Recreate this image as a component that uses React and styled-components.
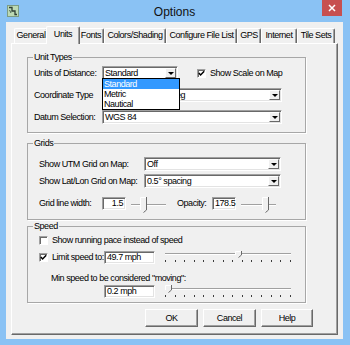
import React from "react";
import styled, { createGlobalStyle } from "styled-components";

const ui = `"Liberation Sans", Arial, sans-serif`;

const GlobalStyle = createGlobalStyle`
  html, body {
    margin: 0;
    padding: 0;
  }
  body {
    width: 350px;
    height: 345px;
    overflow: hidden;
    background: #8ac2f4;
  }
`

const Window = styled.div`
  width: 350px;
  height: 345px;
  box-sizing: border-box;
  background: #8ac2f4;
  display: flex;
  flex-direction: column;
  padding: 0 7px 8px 6px;
  font-family: ${ui};
  font-size: 9px;
  letter-spacing: -0.45px;
  color: #000;
`
const TitleBar = styled.div`
  height: 22px;
  flex: none;
  display: grid;
  grid-template-columns: 1fr auto 1fr;
  align-items: start;
`
const AppIcon = styled.svg`
  margin: 5px 0 0 1px;
`
const Title = styled.div`
  font-size: 12px;
  letter-spacing: 0;
  line-height: 14px;
  padding-top: 5px;
  color: #111;
`
const Close = styled.div`
  justify-self: end;
  margin-right: 1px;
  width: 20px;
  height: 16px;
  background: #c75050;
  display: flex;
  align-items: center;
  justify-content: center;
`
const Client = styled.div`
  flex: 1;
  background: #f0f0f0;
  display: flex;
  flex-direction: column;
  padding: 0 5px 4px 5px;
`
const TabRow = styled.div`
  height: 21px;
  flex: none;
  display: flex;
  align-items: flex-end;
  padding-left: 3px;
`
const Tab = styled.div`
  box-sizing: border-box;
  width: ${({ w, active }) => (active ? w + 4 : w)}px;
  height: ${({ active }) => (active ? 18 : 15)}px;
  margin: ${({ active }) => (active ? "0 -2px -1px -2px" : "0")};
  position: relative;
  z-index: ${({ active }) => (active ? 1 : 0)};
  background: #f0f0f0;
  border-top: 1px solid #fff;
  border-left: 1px solid #fff;
  border-right: 1px solid #696969;
  border-radius: 2px 2px 0 0;
  box-shadow: inset -1px 0 0 #a0a0a0;
  text-align: center;
  line-height: ${({ active }) => (active ? 14 : 13)}px;
  white-space: nowrap;
`
const Panel = styled.div`
  flex: 1;
  box-sizing: border-box;
  display: flex;
  flex-direction: column;
  border: 1px solid;
  border-color: #fff #696969 #696969 #fff;
  box-shadow: inset -1px -1px 0 #a0a0a0;
  padding: 7px 0 7px 15px;
`
const Group = styled.fieldset`
  margin: 0 0 ${({ mb }) => mb || 0}px 0;
  padding: 0;
  min-width: 0;
  width: 279px;
  box-sizing: border-box;
  border: 1px solid #a7a7a7;
  box-shadow: 1px 1px 0 #fff;
`
const Legend = styled.legend`
  margin-left: 5px;
  padding: 0 1px;
  line-height: 12px;
`
const GroupBody = styled.div`
  display: flex;
  flex-direction: column;
  padding: ${({ pad }) => pad};
`
const Row = styled.div`
  display: flex;
  align-items: ${({ top }) => (top ? "flex-start" : "center")};
  margin-top: ${({ mt }) => mt || 0}px;
  padding-left: ${({ indent }) => indent || 0}px;
  width: ${({ w }) => (w ? `${w}px` : "auto")};
  flex: none;
`
const Label = styled.div`
  width: ${({ w }) => (w ? `${w}px` : "auto")};
  flex: none;
  line-height: 13px;
  white-space: nowrap;
  margin-left: ${({ ml }) => ml || 0}px;
`
const ComboWrap = styled.div`
  position: relative;
  width: ${({ w }) => w}px;
  height: 14px;
  flex: none;
`
const ComboBox = styled.div`
  box-sizing: border-box;
  width: 100%;
  height: 100%;
  background: #fff;
  border: 1px solid;
  border-color: #a0a0a0 #fff #fff #a0a0a0;
  box-shadow: inset 1px 1px 0 #696969, inset -1px -1px 0 #e3e3e3;
  display: flex;
  align-items: stretch;
`
const ComboText = styled.div`
  flex: 1;
  padding-left: 2px;
  line-height: 12px;
  white-space: nowrap;
  overflow: hidden;
`
const ArrowBtn = styled.div`
  box-sizing: border-box;
  width: 11px;
  margin: 1px 1px 1px 0;
  background: #f0f0f0;
  border: 1px solid;
  border-color: #fff #696969 #696969 #fff;
  display: flex;
  align-items: center;
  justify-content: center;
  &::after {
    content: "";
    width: 0;
    height: 0;
    border-left: 3px solid transparent;
    border-right: 3px solid transparent;
    border-top: 3px solid #000;
    margin-top: 1px;
  }
`
const DropList = styled.div`
  position: absolute;
  left: 0;
  top: 12px;
  width: 78px;
  box-sizing: border-box;
  border: 1px solid #000;
  background: #fff;
  z-index: 2;
`
const DropItem = styled.div`
  height: 10px;
  line-height: 10px;
  padding-left: 1px;
  background: ${({ selected }) => (selected ? "#3399ff" : "#fff")};
  color: ${({ selected }) => (selected ? "#fff" : "#000")};
`
const CheckBox = styled.div`
  box-sizing: border-box;
  width: 9px;
  height: 9px;
  flex: none;
  background: #fff;
  border: 1px solid;
  border-color: #a0a0a0 #fff #fff #a0a0a0;
  box-shadow: inset 1px 1px 0 #696969;
  margin-right: 4px;
  display: flex;
  align-items: center;
  justify-content: center;
`
const Edit = styled.div`
  box-sizing: border-box;
  width: ${({ w }) => w}px;
  height: 13px;
  flex: none;
  background: #fff;
  border: 1px solid;
  border-color: #a0a0a0 #fff #fff #a0a0a0;
  box-shadow: inset 1px 1px 0 #696969, inset -1px -1px 0 #e3e3e3;
  padding: 0 2px;
  line-height: 11px;
  text-align: ${({ right }) => (right ? "right" : "left")};
  white-space: nowrap;
`
const SliderBox = styled.div`
  position: relative;
  width: ${({ w }) => w}px;
  height: ${({ h }) => h}px;
  margin-left: ${({ ml }) => ml || 0}px;
  flex: none;
`
const Track = styled.div`
  position: absolute;
  left: 0;
  right: 0;
  top: ${({ y }) => y}px;
  height: 2px;
  border-top: 1px solid #a0a0a0;
  border-bottom: 1px solid #fff;
  box-sizing: border-box;
`
const Thumb = styled.svg`
  position: absolute;
  top: 0;
`
const Ticks = styled.div`
  position: absolute;
  left: 0;
  right: 0;
  top: ${({ y }) => y}px;
  display: flex;
  justify-content: space-between;
`
const Tick = styled.span`
  width: 1px;
  height: 2px;
  background: #3c3c3c;
`
const ButtonRow = styled.div`
  display: flex;
  justify-content: flex-end;
  gap: 5px;
  padding-right: 24px;
  margin-top: 6px;
`
const Button = styled.div`
  box-sizing: border-box;
  width: ${({ w }) => w}px;
  height: 18px;
  background: #f0f0f0;
  border: 1px solid;
  border-color: #fff #696969 #696969 #fff;
  box-shadow: inset -1px -1px 0 #a0a0a0;
  display: flex;
  align-items: center;
  justify-content: center;
`

const Combo = ({ w, value, children }) => (
  <ComboWrap w={w}>
    <ComboBox>
      <ComboText>{value}</ComboText>
      <ArrowBtn />
    </ComboBox>
    {children}
  </ComboWrap>
)

const Check = ({ checked }) => (
  <CheckBox>
    {checked && (
      <svg width="7" height="7" viewBox="0 0 7 7">
        <path d="M0.8 3 L2.6 4.9 L6.2 1.2" fill="none" stroke="#000" strokeWidth="1.5" />
      </svg>
    )}
  </CheckBox>
)

const Slider = ({ w, h, trackY, pos, thumbH, ticks, tickY, ml }) => (
  <SliderBox w={w} h={h} ml={ml}>
    <Track y={trackY} />
    {ticks && (
      <Ticks y={tickY}>
        {Array.from({ length: ticks }).map((_, i) => (
          <Tick key={i} />
        ))}
      </Ticks>
    )}
    <Thumb width="7" height={thumbH} style={{ left: pos }} viewBox={`0 0 7 ${thumbH}`}>
      <path d={`M0 0 H7 V${thumbH - 3} L3.5 ${thumbH} L0 ${thumbH - 3} Z`} fill="#f0f0f0" />
      <path d={`M0.5 ${thumbH - 3} V0.5 H6`} fill="none" stroke="#fff" />
      <path d={`M6.5 0 V${thumbH - 3} L3.5 ${thumbH - 0.5}`} fill="none" stroke="#696969" />
    </Thumb>
  </SliderBox>
)

const tabs = [
  ["General", 34],
  ["Units", 30],
  ["Fonts", 26],
  ["Colors/Shading", 62],
  ["Configure File List", 71],
  ["GPS", 24],
  ["Internet", 36],
  ["Tile Sets", 38],
]

export default function App() {
  return (
    <>
      <GlobalStyle />
      <Window>
        <TitleBar>
          <AppIcon width="12" height="12" viewBox="0 0 12 12">
            <rect x="0.5" y="0.5" width="11" height="11" fill="#bcd9b4" stroke="#7c9c84" />
            <path d="M2 2.5 H5 V6 H8 V9.5 H10" fill="none" stroke="#2f3f36" strokeWidth="1.3" />
            <path d="M2.5 5 L4 8" fill="none" stroke="#4b6455" strokeWidth="1" />
          </AppIcon>
          <Title>Options</Title>
          <Close>
            <svg width="8" height="8" viewBox="0 0 8 8">
              <path d="M1 1 L7 7 M7 1 L1 7" stroke="#fff" strokeWidth="1.5" />
            </svg>
          </Close>
        </TitleBar>
        <Client>
          <TabRow>
            {tabs.map(([name, w]) => (
              <Tab key={name} w={w} active={name === "Units"}>
                {name}
              </Tab>
            ))}
          </TabRow>
          <Panel>
            <Group mb={4}>
              <Legend>Unit Types</Legend>
              <GroupBody pad="3px 0 8px 6px">
                <Row>
                  <Label w={68}>Units of Distance:</Label>
                  <Combo w={76} value="Standard">
                    <DropList>
                      <DropItem selected>Standard</DropItem>
                      <DropItem>Metric</DropItem>
                      <DropItem>Nautical</DropItem>
                    </DropList>
                  </Combo>
                  <Row indent={19}>
                    <Check checked />
                    <Label>Show Scale on Map</Label>
                  </Row>
                </Row>
                <Row mt={8}>
                  <Label w={68}>Coordinate Type</Label>
                  <Combo w={180} value="Lat/Lon - Decimal Deg" />
                </Row>
                <Row mt={8}>
                  <Label w={68}>Datum Selection:</Label>
                  <Combo w={180} value="WGS 84" />
                </Row>
              </GroupBody>
            </Group>

            <Group>
              <Legend>Grids</Legend>
              <GroupBody pad="8px 0 6px 11px">
                <Row>
                  <Label w={105}>Show UTM Grid on Map:</Label>
                  <Combo w={137} value="Off" />
                </Row>
                <Row mt={3}>
                  <Label w={105}>Show Lat/Lon Grid on Map:</Label>
                  <Combo w={137} value="0.5° spacing" />
                </Row>
                <Row mt={9} top>
                  <Label w={63}>Grid line width:</Label>
                  <Edit w={24} right>1.5</Edit>
                  <Slider w={35} h={16} trackY={7} pos={9} thumbH={16} ml={5} />
                  <Label w={35} ml={11}>Opacity:</Label>
                  <Edit w={24} right>178.5</Edit>
                  <Slider w={35} h={16} trackY={7} pos={21} thumbH={16} ml={5} />
                </Row>
              </GroupBody>
            </Group>

            <Group>
              <Legend>Speed</Legend>
              <GroupBody pad="2px 0 4px 11px">
                <Row>
                  <Check />
                  <Label>Show running pace instead of speed</Label>
                </Row>
                <Row mt={4} top>
                  <Row w={65}>
                    <Check checked />
                    <Label>Limit speed to:</Label>
                  </Row>
                  <Edit w={51}>49.7 mph</Edit>
                  <Slider w={126} h={13} trackY={2} pos={70} thumbH={7} ticks={14} tickY={9} ml={10} />
                </Row>
                <Row mt={8} indent={12}>
                  <Label>Min speed to be considered "moving":</Label>
                </Row>
                <Row indent={65} top>
                  <Edit w={51}>0.2 mph</Edit>
                  <Slider w={126} h={13} trackY={3} pos={0} thumbH={8} ticks={14} tickY={10} ml={10} />
                </Row>
              </GroupBody>
            </Group>

            <ButtonRow>
              <Button w={53}>OK</Button>
              <Button w={53}>Cancel</Button>
              <Button w={52}>Help</Button>
            </ButtonRow>
          </Panel>
        </Client>
      </Window>
    </>
  )
}
